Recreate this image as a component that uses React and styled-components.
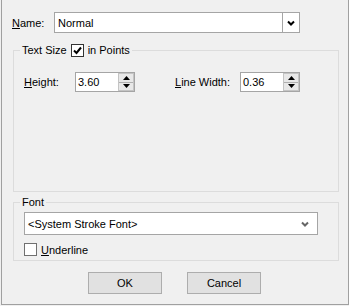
import React from "react";
import styled, { createGlobalStyle } from "styled-components";

const GlobalStyle = createGlobalStyle`
  html, body { margin: 0; padding: 0; background: #f0f0f0; }
  body { font-family: "Liberation Sans", Arial, sans-serif; font-size: 11px; color: #000; }
  u { text-decoration: underline; text-underline-offset: 1px; }
`;

function Chevron({ color }) {
    return (
        <svg width="8" height="6" viewBox="0 0 8 6">
            <path d="M1 1.5 L4 4.5 L7 1.5" fill="none" stroke={color} strokeWidth="2" />
        </svg>
    );
}

function Arrow({ up }) {
    return (
        <svg width="7" height="4" viewBox="0 0 7 4">
            <path d={up ? "M0 4 L3.5 0 L7 4 Z" : "M0 0 L3.5 4 L7 0 Z"} fill="#000" />
        </svg>
    );
}

function Check() {
    return (
        <svg width="11" height="11" viewBox="0 0 11 11">
            <path d="M2 5.5 L4.5 8 L9 2.5" fill="none" stroke="#000" strokeWidth="2" />
        </svg>
    );
}

function Spin({ value }) {
    return (
        <SpinBox>
            <SpinText>{value}</SpinText>
            <SpinButtons>
                <SpinHalf><Arrow up /></SpinHalf>
                <SpinHalf divider><Arrow /></SpinHalf>
            </SpinButtons>
        </SpinBox>
    );
}

function App() {
    return (
        <>
            <GlobalStyle />
            <Window>
                <NameRow>
                    <NameLabel><u>N</u>ame:</NameLabel>
                    <Combo width={246} height={21}>
                        <ComboText>Normal</ComboText>
                        <DropButton divider>
                            <Chevron color="#000" />
                        </DropButton>
                    </Combo>
                </NameRow>

                <Group height={149}>
                    <Legend>
                        Text Size
                        <Box checked><Check /></Box>
                        in Points
                    </Legend>
                    <SizeRow>
                        <FieldLabel width={51}><u>H</u>eight:</FieldLabel>
                        <Spin value="3.60" />
                        <FieldLabel width={65} gap={40}><u>L</u>ine Width:</FieldLabel>
                        <Spin value="0.36" />
                    </SizeRow>
                </Group>

                <Group height={66} top={3}>
                    <Legend>Font</Legend>
                    <FontBody>
                        <Combo width={294} height={23}>
                            <ComboText>&lt;System Stroke Font&gt;</ComboText>
                            <DropButton>
                                <Chevron color="#666" />
                            </DropButton>
                        </Combo>
                        <CheckRow>
                            <Box />
                            <span><u>U</u>nderline</span>
                        </CheckRow>
                    </FontBody>
                </Group>

                <Buttons>
                    <Button>OK</Button>
                    <Button>Cancel</Button>
                </Buttons>
            </Window>
        </>
    );
}

export default App;

const Window = styled.div`
    width: 348px;
    height: 305px;
    margin-left: 1px;
    box-sizing: border-box;
    border: 1px solid #a0a0a0;
    border-top: none;
    padding: 12px 9px 0 11px;
    display: flex;
    flex-direction: column;
`
const NameRow = styled.div`
    display: flex;
    align-items: center;
    margin-left: -1px;
`
const NameLabel = styled.div`
    width: 42px;
`
const Combo = styled.div`
    width: ${p => p.width}px;
    height: ${p => p.height}px;
    box-sizing: border-box;
    border: 1px solid #a5a5a5;
    background: #fff;
    display: flex;
    align-items: center;
`
const ComboText = styled.div`
    flex: 1;
    padding-left: 3px;
`
const DropButton = styled.div`
    width: 16px;
    height: 100%;
    display: flex;
    align-items: center;
    justify-content: center;
    border-left: ${p => (p.divider ? "1px solid #a5a5a5" : "none")};
    margin-right: ${p => (p.divider ? 0 : 4)}px;
`
const Group = styled.fieldset`
    margin: ${p => p.top ?? 10}px 0 0;
    padding: 0;
    height: ${p => p.height}px;
    box-sizing: border-box;
    border: 1px solid #dcdcdc;
    min-width: 0;
`
const Legend = styled.legend`
    margin-left: 6px;
    padding: 0 2px;
    display: flex;
    align-items: center;
    height: 14px;
`
const Box = styled.div`
    width: 13px;
    height: 13px;
    box-sizing: border-box;
    border: 1px solid ${p => (p.checked ? "#333" : "#707070")};
    background: #fff;
    display: flex;
    align-items: center;
    justify-content: center;
    margin: 0 4px;
`
const SizeRow = styled.div`
    display: flex;
    align-items: center;
    margin-top: 15px;
    padding-left: 10px;
`
const FieldLabel = styled.div`
    width: ${p => p.width}px;
    margin-left: ${p => p.gap ?? 0}px;
`
const SpinBox = styled.div`
    width: 60px;
    height: 20px;
    box-sizing: border-box;
    border: 1px solid #a5a5a5;
    background: #fff;
    display: flex;
    align-items: center;
`
const SpinText = styled.div`
    flex: 1;
    padding-left: 2px;
`
const SpinButtons = styled.div`
    width: 16px;
    height: 18px;
    box-sizing: border-box;
    border: 1px solid #c4c4c4;
    background: #e8e8e8;
    display: flex;
    flex-direction: column;
`
const SpinHalf = styled.div`
    flex: 1;
    display: flex;
    align-items: center;
    justify-content: center;
    border-top: ${p => (p.divider ? "1px solid #b0b0b0" : "none")};
`
const FontBody = styled.div`
    padding-left: 10px;
    margin-top: 3px;
`
const CheckRow = styled.div`
    display: flex;
    align-items: center;
    margin-top: 8px;
    & > div { margin: 0 4px 0 0; }
`
const Buttons = styled.div`
    display: flex;
    gap: 25px;
    margin-top: 11px;
    padding-left: 75px;
`
const Button = styled.button`
    width: 74px;
    height: 22px;
    border: 1px solid #adadad;
    background: #e1e1e1;
    font-family: "Liberation Sans", Arial, sans-serif;
    font-size: 11px;
    color: #000;
    padding: 0;
`
